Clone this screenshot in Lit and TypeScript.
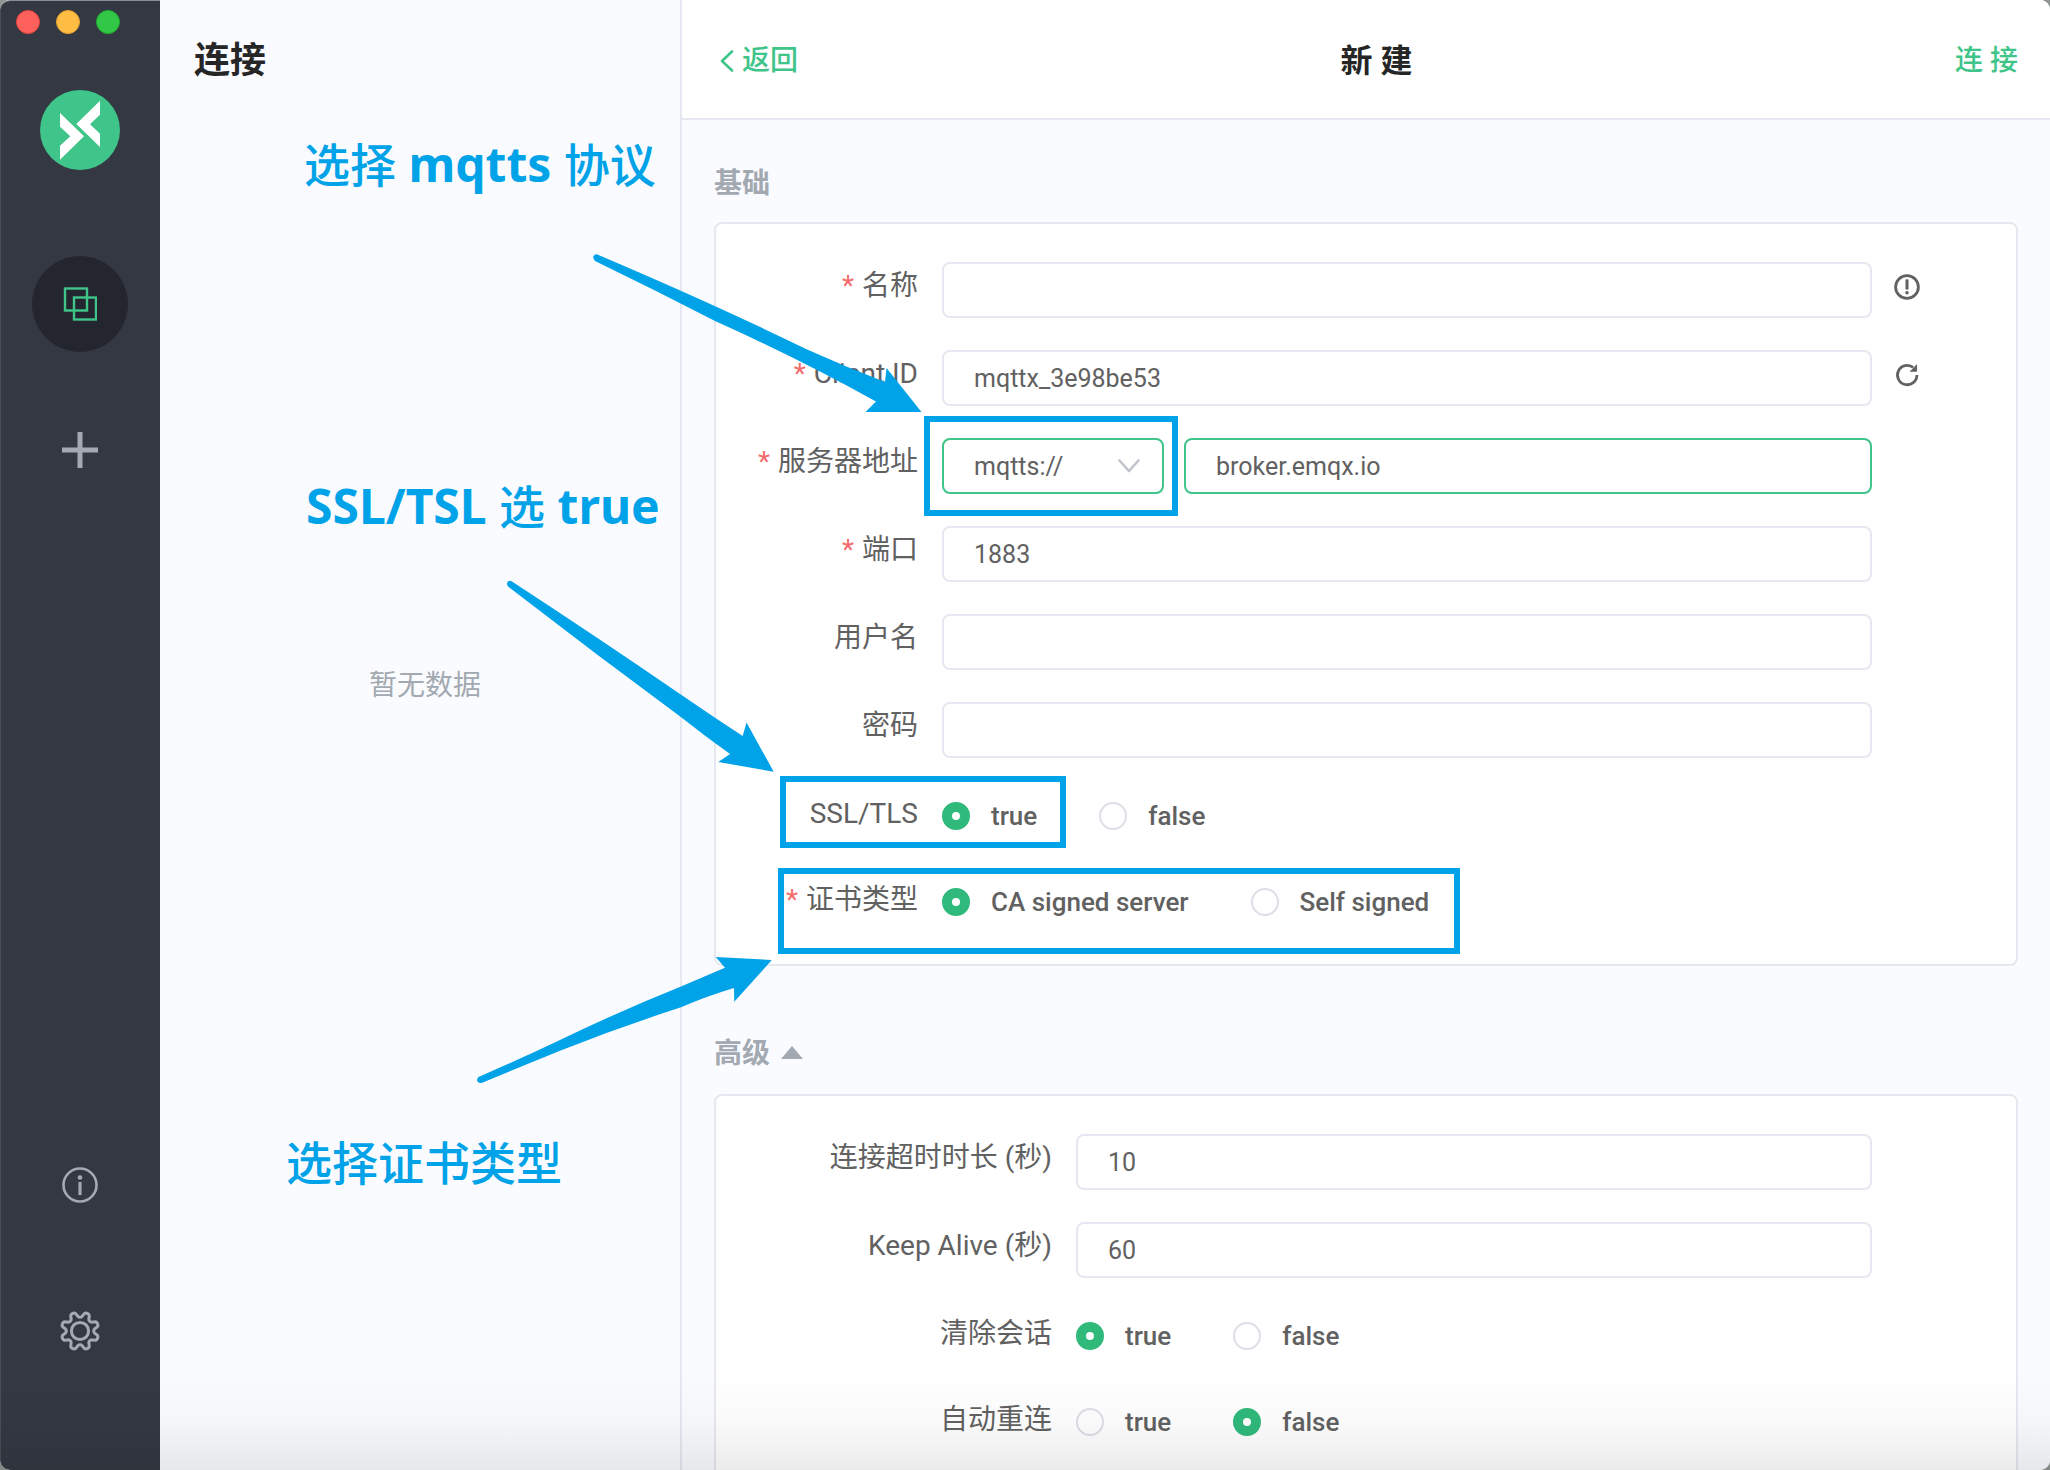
import { LitElement, html, svg, css, nothing } from "lit";
import { customElement, property, state } from "lit/decorators.js";

/** Builds the outline of an eight-toothed gear centred on (20, 20). */
function gearPath(): string {
  const points: string[] = [];
  const steps = 160;
  for (let i = 0; i < steps; i++) {
    const a = (i / steps) * Math.PI * 2;
    const wave = Math.tanh(1.6 * Math.cos(8 * a - Math.PI)) / Math.tanh(1.6);
    const r = 16.4 + 2.6 * wave;
    points.push(`${(20 + r * Math.cos(a)).toFixed(2)} ${(20 + r * Math.sin(a)).toFixed(2)}`);
  }
  return `M${points.join("L")}Z`;
}

const icons = {
  logo: svg`<svg class="logo" viewBox="0 0 240 240" aria-hidden="true">
    <circle cx="120" cy="120" r="120" fill="#3fc48a"/>
    <path fill="#fff" d="M180 32V74L150 103L180 131V171L109 102Z M60 69L132 139L60 209V167L91 139L60 110Z"/>
  </svg>`,
  copies: svg`<svg width="34" height="34" viewBox="0 0 34 34" fill="none" stroke="#3fc48a" stroke-width="2.4" aria-hidden="true">
    <rect x="2" y="1.500" width="22" height="22"/><rect x="11" y="10.500" width="22" height="22"/>
  </svg>`,
  plus: svg`<svg width="36" height="36" viewBox="0 0 36 36" stroke="#a6a9b4" stroke-width="5" aria-hidden="true">
    <path d="M18 0V36M0 18H36"/>
  </svg>`,
  info: svg`<svg width="36" height="36" viewBox="0 0 36 36" fill="none" stroke="#a6a9b4" aria-hidden="true">
    <circle cx="18" cy="18" r="16.5" stroke-width="2.6"/>
    <circle cx="18" cy="10.5" r="2.3" fill="#a6a9b4" stroke="none"/>
    <path d="M18 15V28" stroke-width="3.2"/>
  </svg>`,
  gear: svg`<svg width="40" height="40" viewBox="0 0 40 40" fill="none" stroke="#a6a9b4" stroke-width="3" stroke-linejoin="round" aria-hidden="true">
    <path d="${gearPath()}"/><circle cx="20" cy="20" r="8.6"/>
  </svg>`,
  back: svg`<svg width="14" height="22" viewBox="0 0 14 22" fill="none" stroke="currentColor" stroke-width="2.6" stroke-linecap="round" stroke-linejoin="round" aria-hidden="true">
    <path d="M12 1.5L2 11L12 20.5"/>
  </svg>`,
  down: svg`<svg class="chevron" width="22" height="14" viewBox="0 0 22 14" fill="none" stroke="#c0c4cc" stroke-width="2.6" stroke-linecap="round" stroke-linejoin="round" aria-hidden="true">
    <path d="M1.5 1.5L11 12L20.5 1.5"/>
  </svg>`,
  warning: svg`<svg width="26" height="26" viewBox="0 0 26 26" fill="none" stroke="#616161" aria-hidden="true">
    <circle cx="13" cy="13" r="11.4" stroke-width="2.8"/>
    <path d="M13 6.6V14.2" stroke-width="3" stroke-linecap="round"/>
    <circle cx="13" cy="18.7" r="1.8" fill="#616161" stroke="none"/>
  </svg>`,
  refresh: svg`<svg width="26" height="26" viewBox="0 0 26 26" fill="none" stroke="#616161" aria-hidden="true">
    <path d="M22.9 13A9.7 9.7 0 1 1 19.3 5.5" stroke-width="2.8"/>
    <path d="M22.6 2.8V9.2H16.4L20 6Z" fill="#616161" stroke="#616161" stroke-width="1"/>
  </svg>`,
};

interface Choice {
  value: string;
  text: string;
}

const TRUE_FALSE: Choice[] = [
  { value: "true", text: "true" },
  { value: "false", text: "false" },
];

interface Field {
  id: string;
  label: string;
  kind: "text" | "password" | "address" | "radio";
  value: string;
  required?: boolean;
  choices?: Choice[];
  action?: { label: string; icon: unknown };
}

const BASIC: Field[] = [
  { id: "name", label: "名称", kind: "text", value: "", required: true, action: { label: "名称说明", icon: icons.warning } },
  { id: "client", label: "Client ID", kind: "text", value: "mqttx_3e98be53", required: true, action: { label: "刷新 Client ID", icon: icons.refresh } },
  { id: "host", label: "服务器地址", kind: "address", value: "broker.emqx.io", required: true },
  { id: "port", label: "端口", kind: "text", value: "1883", required: true },
  { id: "user", label: "用户名", kind: "text", value: "" },
  { id: "password", label: "密码", kind: "password", value: "" },
  { id: "ssl", label: "SSL/TLS", kind: "radio", value: "true", choices: TRUE_FALSE },
  {
    id: "cert", label: "证书类型", kind: "radio", value: "server", required: true,
    choices: [
      { value: "server", text: "CA signed server" },
      { value: "self", text: "Self signed" },
    ],
  },
];

const ADVANCED: Field[] = [
  { id: "timeout", label: "连接超时时长 (秒)", kind: "text", value: "10" },
  { id: "keepalive", label: "Keep Alive (秒)", kind: "text", value: "60" },
  { id: "clean", label: "清除会话", kind: "radio", value: "true", choices: TRUE_FALSE },
  { id: "reconnect", label: "自动重连", kind: "radio", value: "false", choices: TRUE_FALSE },
];

@customElement("side-rail")
class SideRail extends LitElement {
  static styles = css`
    :host { display: block; flex: 0 0 160px; }
    .rail {
      box-sizing: border-box; height: 100%; display: flex; flex-direction: column; align-items: center;
      background: #343842; border-top: 1px solid #8b8d93; box-shadow: inset 1px 0 #4a4d56;
      border-radius: 10px 0 0 10px;
    }
    .lights { align-self: stretch; display: flex; gap: 16px; padding: 9px 16px 0; }
    .light { width: 24px; height: 24px; border-radius: 50%; padding: 0; border: 1px solid; box-sizing: border-box; }
    .close { background: #ff605c; border-color: #e2463f; }
    .minimize { background: #ffbd44; border-color: #e09e2e; }
    .zoom { background: #33c748; border-color: #1dad2b; }
    .logo { display: block; width: 80px; height: 80px; margin-top: 56px; }
    nav { flex: 1; display: flex; flex-direction: column; align-items: center; gap: 50px; padding: 86px 0 91px; }
    .item {
      width: 96px; height: 96px; border: 0; padding: 0; border-radius: 50%; background: none;
      display: grid; place-items: center; cursor: pointer;
    }
    .active { background: #23262e; }
    .push { margin-top: auto; }
  `;

  render() {
    return html`<div class="rail">
      <div class="lights">
        <button class="light close" aria-label="关闭"></button>
        <button class="light minimize" aria-label="最小化"></button>
        <button class="light zoom" aria-label="缩放"></button>
      </div>
      ${icons.logo}
      <nav>
        <button class="item active" aria-label="连接">${icons.copies}</button>
        <button class="item" aria-label="新建">${icons.plus}</button>
        <button class="item push" aria-label="关于">${icons.info}</button>
        <button class="item" aria-label="设置">${icons.gear}</button>
      </nav>
    </div>`;
  }
}

@customElement("form-card")
class FormCard extends LitElement {
  static styles = css`
    :host { display: block; }
    .card {
      display: flex; flex-direction: column; gap: 32px; padding: 38px 0 34px;
      background: #fff; border: 2px solid #e6e8f1; border-radius: 8px;
    }
    .row { display: grid; grid-template-columns: 202px minmax(0, 1fr) 144px; align-items: start; }
    .wide .row { grid-template-columns: 336px minmax(0, 1fr) 144px; }
    .label { font-size: 28px; line-height: 47px; text-align: right; white-space: nowrap; color: #616161; }
    .required::before { content: "*"; margin-right: 8px; color: #f56c6c; }
    .control { display: flex; gap: 20px; min-height: 54px; margin-left: 24px; }
    input, select { font: inherit; color: inherit; }
    .box {
      box-sizing: border-box; flex: 1; min-width: 0; width: 100%; height: 56px; padding: 0 30px; margin: 0;
      font-size: 25px; border: 2px solid #e6e8f1; border-radius: 8px; background: #fff; outline: 0; appearance: none;
    }
    .focus { border-color: #3fc48a; }
    .scheme { flex: 0 0 222px; display: grid; align-items: center; }
    .scheme > * { grid-area: 1 / 1; }
    .chevron { justify-self: end; margin-right: 24px; pointer-events: none; }
    .radios { display: flex; gap: 62px; height: 52px; }
    .radio { display: flex; align-items: center; gap: 21px; font-size: 26px; font-weight: 500; cursor: pointer; }
    .dot {
      box-sizing: border-box; appearance: none; width: 28px; height: 28px; margin: 0;
      border: 2px solid #dcdfe6; border-radius: 50%; background: #fff;
    }
    .dot:checked { border: 10px solid #2fb97b; }
    .action {
      width: 26px; height: 26px; margin: 12px 0 0 22px; padding: 0; border: 0; background: none; cursor: pointer;
    }
    .action svg { display: block; }
  `;

  @property({ attribute: false }) fields: Field[] = [];
  @property({ type: Boolean }) wide = false;

  private control(f: Field) {
    if (f.kind === "radio") {
      return html`<div class="radios" role="radiogroup" aria-labelledby="${f.id}-label">
        ${f.choices!.map((c) => html`<label class="radio">
          <input class="dot" type="radio" name=${f.id} value=${c.value} ?checked=${c.value === f.value}>${c.text}
        </label>`)}
      </div>`;
    }
    if (f.kind === "address") {
      return html`<div class="scheme">
          <select class="box focus" aria-label="协议"><option>mqtts://</option><option>mqtt://</option></select>
          ${icons.down}
        </div>
        <input class="box focus" id=${f.id} type="text" .value=${f.value}>`;
    }
    return html`<input class="box" id=${f.id} type=${f.kind} .value=${f.value}>`;
  }

  private label(f: Field) {
    const cls = `label ${f.required ? "required" : ""}`;
    return f.kind === "radio"
      ? html`<span class=${cls} id="${f.id}-label">${f.label}</span>`
      : html`<label class=${cls} for=${f.id}>${f.label}</label>`;
  }

  render() {
    return html`<div class="card ${this.wide ? "wide" : ""}">
      ${this.fields.map((f) => html`<div class="row">
        ${this.label(f)}
        <div class="control">${this.control(f)}</div>
        ${f.action ? html`<button class="action" aria-label=${f.action.label}>${f.action.icon}</button>` : nothing}
      </div>`)}
    </div>`;
  }
}

/** Tutorial notes drawn over the window: captions, arrows and frames. */
@customElement("tutorial-notes")
class TutorialNotes extends LitElement {
  static styles = css`
    :host { position: absolute; inset: 0; pointer-events: none; overflow: hidden; color: #00a2e8; }
    .arrows { position: absolute; left: 0; top: 0; }
    .note {
      position: absolute; margin: 0; white-space: pre; font-size: 46px; line-height: 60px; font-weight: 500;
      font-family: "Noto Sans CJK SC", sans-serif;
    }
    .latin { font-family: "Noto Sans", sans-serif; font-size: 48px; font-weight: 700; }
    .frame { position: absolute; box-sizing: border-box; border: 6px solid #00a2e8; }
    .note-protocol { left: 304px; top: 132px; }
    .note-ssl { left: 306px; top: 474px; }
    .note-cert { left: 286px; top: 1130px; }
    .frame-protocol { left: 924px; top: 416px; width: 254px; height: 100px; }
    .frame-ssl { left: 780px; top: 776px; width: 286px; height: 72px; }
    .frame-cert { left: 778px; top: 868px; width: 682px; height: 86px; }
  `;

  render() {
    return html`
      <svg class="arrows" width="960" height="1100" viewBox="0 0 960 1100" fill="#00a2e8" aria-hidden="true">
        <path d="M598.5 255Q716 305 806 349Q846 367 885 382L886.5 368L921.5 412H865.5L876 401.5Q800 359 715 321Q655 290 595 261Q592 257 594 255.5Q596 253.500 598.5 255Z"/>
        <path d="M512 581.5Q600 639 681.500 695Q712 716 742.700 736L746.500 722.500L773.700 771.700L718.300 762L730 754Q706 737 681.500 717.500Q594 653 508 586.500Q506 583 508 581.500Q510 580 512 581.500Z"/>
        <path d="M478.500 1077Q520 1059 560 1040Q620 1011 681 986.500Q703 977 725 967.700L715.700 957L771.800 960L734.300 1001.700L734 988Q707 996 681 1007.300Q620 1027 560 1050.700Q520 1067 481.500 1083Q478 1083.500 477 1080.500Q477 1078 478.500 1077Z"/>
      </svg>
      <div class="frame frame-protocol"></div>
      <div class="frame frame-ssl"></div>
      <div class="frame frame-cert"></div>
      <p class="note note-protocol">选择<span class="latin"> mqtts </span>协议</p>
      <p class="note note-ssl"><span class="latin">SSL/TSL </span>选<span class="latin"> true</span></p>
      <p class="note note-cert">选择证书类型</p>
    `;
  }
}

@customElement("app-root")
class AppRoot extends LitElement {
  static styles = css`
    :host {
      display: block; position: relative; height: 100vh; overflow: hidden; background: #8f9591;
      font-family: Roboto, "Noto Sans CJK SC", sans-serif; color: #616161;
    }
    .window { display: flex; height: 100%; border-radius: 10px; overflow: hidden; background: #fafbff; }
    .list { box-sizing: border-box; flex: 0 0 522px; background: #fafbff; border-right: 2px solid #e6e8f1; }
    h1 { margin: 0; padding: 36px 34px 0; font-size: 36px; line-height: 50px; font-weight: 700; color: #262626; }
    .empty { margin: 0; padding: 580px 0 0 10px; font-size: 28px; line-height: 40px; text-align: center; color: #a2a9b0; }
    .main { flex: 1; min-width: 0; display: flex; flex-direction: column; background: #fafbff; }
    .top {
      flex: none; box-sizing: border-box; height: 120px; display: flex; justify-content: space-between; align-items: center;
      padding: 4px 32px 0 38px; background: #fff; border-bottom: 2px solid #e6e8f1;
    }
    .link {
      display: flex; align-items: center; gap: 8px; font-size: 28px; line-height: 40px; font-weight: 500;
      color: #3fc48a; text-decoration: none;
    }
    .connect { font: inherit; font-size: 28px; line-height: 40px; font-weight: 500; padding: 0; border: 0; background: none; color: #3fc48a; cursor: pointer; }
    h2 { margin: 0; font-size: 32px; line-height: 44px; font-weight: 700; color: #262626; }
    .form { flex: 1; min-height: 0; overflow: hidden; padding: 42px 32px 0; }
    .section { margin: 0 0 16px; font-size: 28px; line-height: 44px; font-weight: 700; color: #a2a9b0; }
    .advanced { margin: 66px 0 18px; }
    .toggle { display: flex; align-items: center; gap: 11px; font: inherit; padding: 0; border: 0; background: none; color: inherit; cursor: pointer; }
    .caret { margin-bottom: 4px; border: solid transparent; border-width: 0 11px 13px; border-bottom-color: #a2a9b0; }
    .fade {
      position: absolute; inset: auto 0 0 0; height: 100px; pointer-events: none;
      background: linear-gradient(rgba(0, 0, 0, 0), rgba(0, 0, 0, 0.02) 50%, rgba(0, 0, 0, 0.08));
    }
  `;

  @state() private expanded = true;

  render() {
    return html`
      <div class="window">
        <side-rail></side-rail>
        <section class="list">
          <h1>连接</h1>
          <p class="empty">暂无数据</p>
        </section>
        <main class="main">
          <header class="top">
            <a class="link" href="#">${icons.back}<span>返回</span></a>
            <h2>新 建</h2>
            <button class="connect">连 接</button>
          </header>
          <div class="form">
            <h3 class="section">基础</h3>
            <form-card .fields=${BASIC}></form-card>
            <h3 class="section advanced">
              <button class="toggle" aria-expanded=${this.expanded} @click=${() => (this.expanded = !this.expanded)}>
                高级<span class="caret"></span>
              </button>
            </h3>
            ${this.expanded ? html`<form-card wide .fields=${ADVANCED}></form-card>` : nothing}
          </div>
        </main>
      </div>
      <div class="fade"></div>
      <tutorial-notes></tutorial-notes>
    `;
  }
}
